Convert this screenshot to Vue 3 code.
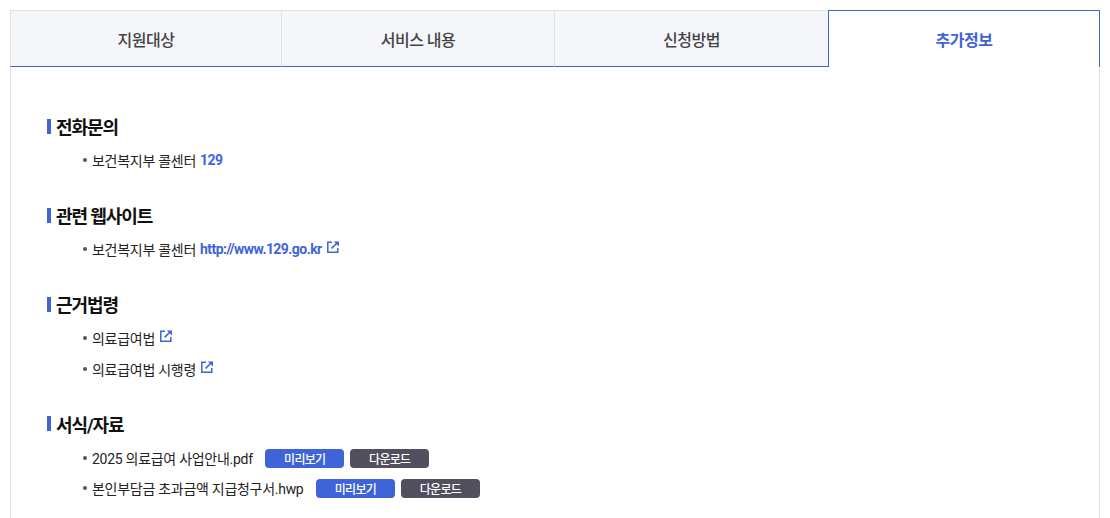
<script setup>
const tabs = ['지원대상', '서비스 내용', '신청방법', '추가정보']
const activeTab = 3

const sections = [
  { title: '전화문의', rows: [{ text: '보건복지부 콜센터', link: '129' }] },
  { title: '관련 웹사이트', rows: [{ text: '보건복지부 콜센터', link: 'http://www.129.go.kr', external: true }] },
  { title: '근거법령', rows: [{ text: '의료급여법', external: true }, { text: '의료급여법 시행령', external: true }] },
  { title: '서식/자료', rows: [{ text: '2025 의료급여 사업안내.pdf', file: true }, { text: '본인부담금 초과금액 지급청구서.hwp', file: true }] }
]
</script>

<template>
  <div class="page">
    <ul class="tabs">
      <li v-for="(tab, i) in tabs" :key="tab" class="tab" :class="{ active: i === activeTab }">{{ tab }}</li>
    </ul>
    <div class="panel">
      <section v-for="sec in sections" :key="sec.title" class="section">
        <h3 class="title">{{ sec.title }}</h3>
        <ul class="rows">
          <li v-for="row in sec.rows" :key="row.text" class="row">
            <span class="dot"></span>
            <span>{{ row.text }}</span>
            <a v-if="row.link" class="link">{{ row.link }}</a>
            <svg v-if="row.external" class="ext" viewBox="0 0 12 12" width="12" height="12" fill="none">
              <path d="M5 1.2H.8v10h10V7" stroke="#3f63d8" stroke-width="1.5" />
              <path d="M4.6 7.4 9.8 2.2" stroke="#3f63d8" stroke-width="1.6" />
              <path d="M6.8.4H12v5.2z" fill="#3f63d8" />
            </svg>
            <template v-if="row.file">
              <button class="btn preview">미리보기</button>
              <button class="btn download">다운로드</button>
            </template>
          </li>
        </ul>
      </section>
    </div>
  </div>
</template>

<style>
html, body {
  margin: 0;
  background: #fff;
  overflow: hidden;
}
</style>

<style scoped>
.page {
  padding: 10px 10px 0;
  font-family: Roboto, "Noto Sans CJK KR", sans-serif;
  color: #222;
}

.tabs {
  display: grid;
  grid-template-columns: 271px 273px 274px 272px;
  height: 57px;
  margin: 0;
  padding: 0;
  list-style: none;
}

.tab {
  display: flex;
  align-items: center;
  justify-content: center;
  box-sizing: border-box;
  background: #f5f6fa;
  border-top: 1px solid #dfe1e7;
  border-left: 1px solid #dfe1e7;
  border-bottom: 1px solid #3f63d8;
  color: #444;
  font-size: 16px;
  font-weight: 500;
  letter-spacing: -0.5px;
}

.tab.active {
  background: #fff;
  border: 1px solid #3f63d8;
  border-bottom: 0;
  color: #3f63d8;
  font-weight: 700;
}

.panel {
  box-sizing: border-box;
  height: 451px;
  padding: 47.2px 36px 0;
  border-left: 1px solid #dfe1e7;
  border-right: 1px solid #dfe1e7;
}

.section {
  margin-bottom: 28.4px;
}

.title {
  display: flex;
  align-items: center;
  gap: 5px;
  height: 24px;
  margin: 0 0 6px;
  font-size: 18px;
  font-weight: 700;
  letter-spacing: -1.1px;
  color: #111;
}

.title::before {
  content: "";
  width: 4px;
  height: 15px;
  background: #3f63d8;
}

.rows {
  margin: 0;
  padding: 0 0 0 36px;
  list-style: none;
}

.row {
  display: flex;
  align-items: center;
  box-sizing: border-box;
  height: 30.6px;
  padding-top: 1px;
  font-size: 14px;
  letter-spacing: -0.28px;
}

.dot {
  width: 4px;
  height: 4px;
  margin-right: 5px;
  border-radius: 50%;
  background: #555;
}

.link {
  margin-left: 4px;
  color: #3f63d8;
  font-weight: 700;
  letter-spacing: -0.55px;
}

.ext {
  margin: 0 0 4px 5px;
}

.btn {
  width: 79px;
  height: 19px;
  margin-top: 1px;
  margin-left: 6px;
  padding: 0;
  border: 0;
  border-radius: 4px;
  color: #fff;
  font-family: inherit;
  font-size: 12px;
  font-weight: 500;
  letter-spacing: -0.7px;
}

.preview {
  margin-left: 12.5px;
  background: #3f63d8;
}

.download {
  background: #52505e;
}
</style>
